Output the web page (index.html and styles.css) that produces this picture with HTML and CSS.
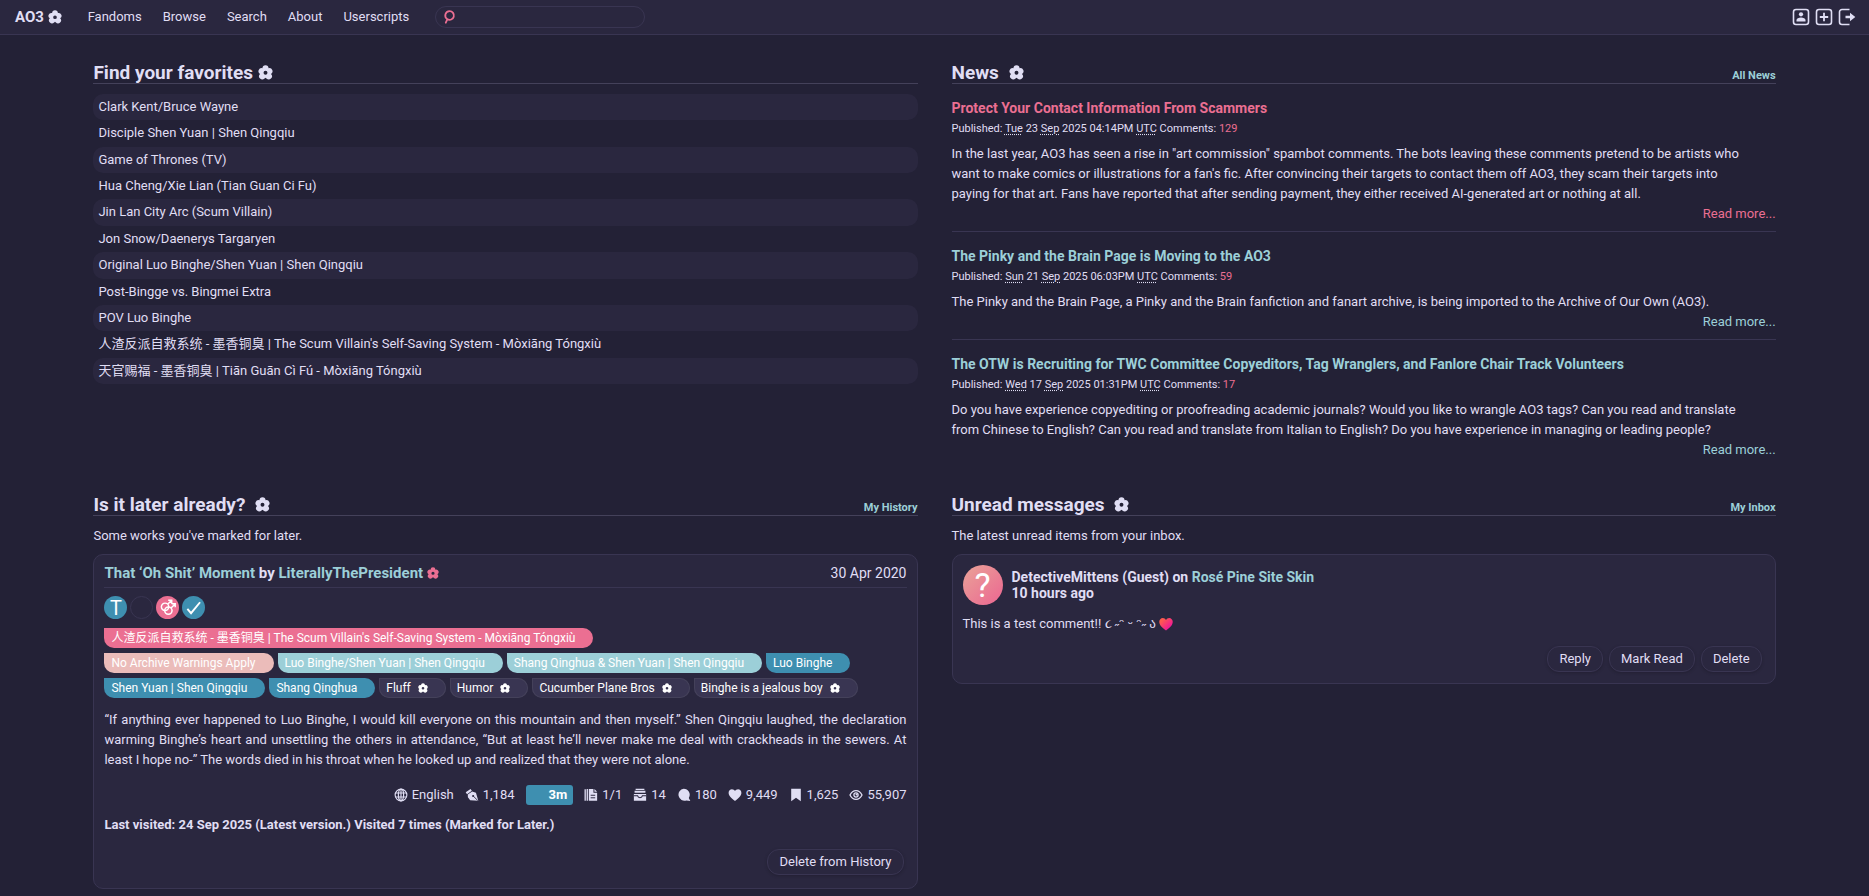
FILE: index.html
```html
<!DOCTYPE html>
<html lang="en">
<head>
<meta charset="utf-8">
<title>AO3</title>
<link rel="stylesheet" href="styles.css">
</head>
<body>
<svg class="sprite" aria-hidden="true">
  <symbol id="flower" viewBox="0 0 16 16"><path fill-rule="evenodd" d="M8 .4a3.3 3.3 0 0 1 3.3 3.1 3.3 3.3 0 0 1 2.6 6 3.3 3.3 0 0 1-4.9 4.8l-1-.8-1 .8a3.3 3.3 0 0 1-4.900-4.800 3.3 3.3 0 0 1 2.600-6A3.300 3.300 0 0 1 8 .4ZM8 6.200a2.100 2.100 0 1 0 0 4.200 2.100 2.100 0 0 0 0-4.200Z"/></symbol>
  <symbol id="lens" viewBox="0 0 14 14"><path d="M7.600 1.200a4.300 4.300 0 1 1-2.200 8l-1.600 3.500M5.400 9.200a4.300 4.300 0 0 1 2.200-8" fill="none" stroke="currentColor" stroke-width="1.800" stroke-linecap="round"/></symbol>
  <symbol id="user" viewBox="0 0 18 18"><rect x="1.500" y="1.500" width="15" height="15" rx="2.500" fill="none" stroke="currentColor" stroke-width="1.600"/><circle cx="9" cy="6.300" r="2.100"/><path d="M4.500 13.500V12c0-1.500 2.200-2.600 4.500-2.600s4.500 1.100 4.500 2.600v1.500Z"/></symbol>
  <symbol id="plus" viewBox="0 0 18 18"><rect x="1.500" y="1.500" width="15" height="15" rx="2.500" fill="none" stroke="currentColor" stroke-width="1.600"/><path d="M8.100 4.800h1.800v3.300h3.300v1.800H9.900v3.300H8.100V9.900H4.800V8.100h3.300Z"/></symbol>
  <symbol id="exit" viewBox="0 0 18 18"><path d="M11.500 1.500H4A2.500 2.500 0 0 0 1.500 4v10A2.500 2.500 0 0 0 4 16.500h7.500" fill="none" stroke="currentColor" stroke-width="1.600"/><path d="M7.500 7.700H12V4.800L17.300 9 12 13.200v-2.900H7.500Z"/></symbol>
  <symbol id="pair" viewBox="0 0 24 24"><g fill="none" stroke="currentColor" stroke-width="1.700"><circle cx="9.200" cy="11.200" r="4.200"/><circle cx="13" cy="15.500" r="4.200"/><path d="M12.200 8.200l4.300-4.300M12.800 3.600h4v4M16 12.500l4.500-4.300M16.800 7.800h4v4"/></g></symbol>
  <symbol id="check" viewBox="0 0 24 24"><path d="M5 13.500l4.200 5L19.500 6" fill="none" stroke="currentColor" stroke-width="2.200"/></symbol>
  <symbol id="globe" viewBox="0 0 16 16"><g fill="none" stroke="currentColor" stroke-width="1.300"><circle cx="8" cy="8" r="6.700"/><ellipse cx="8" cy="8" rx="3" ry="6.700"/><path d="M1.800 5.700h12.400M1.800 10.300h12.400M8 1.300v13.400"/></g></symbol>
  <symbol id="pen" viewBox="0 0 16 16"><path d="M6.300 1L.8 4.900l1.500 2.200L7.800 3.200ZM3.200 7.500l5-3.500 4.300 1.500 2.700 9.200-9.300-.6-2.600-3.600Z"/><path d="M14.600 14.300L9.700 9.500" stroke="#2a273f" stroke-width="1"/><circle cx="9.300" cy="9.200" r="1.200" fill="#2a273f"/></symbol>
  <symbol id="pages" viewBox="0 0 16 16"><path d="M.6 1.500h1.500v13H.6ZM3 1h1.500v13.500H3ZM5.500 1h5.300v4.500H15v9H5.500ZM11.900 1L15 4.400h-3.100Z"/><path d="M7.600 8.300h5.200M7.600 11.200h5.200" stroke="#2a273f" stroke-width="1.100"/></symbol>
  <symbol id="inbox" viewBox="0 0 16 16"><path d="M3 .8h10v1.500H3ZM1.800 3.200h12.400v2.300H1.800ZM1 6.800h14v7.700H1Z"/><path d="M1 8.800h4.200c.3 1.500 1.400 2.300 2.800 2.300s2.500-.8 2.800-2.300H15" fill="none" stroke="#2a273f" stroke-width="1.200"/></symbol>
  <symbol id="bubble" viewBox="0 0 16 16"><path d="M7.600.8a6.900 6.900 0 0 1 5.900 10.500l1.700 3.500-4.500-.6A6.900 6.900 0 1 1 7.600.8Z"/></symbol>
  <symbol id="heart" viewBox="0 0 16 16"><path d="M8 14.800C4 11.800.7 9 .7 5.400.7 3 2.400 1.400 4.500 1.400c1.500 0 2.800.8 3.500 2.100.7-1.300 2-2.100 3.500-2.100 2.100 0 3.800 1.600 3.800 4 0 3.600-3.300 6.400-7.300 9.400Z"/></symbol>
  <symbol id="mark" viewBox="0 0 14 16"><path d="M1.500.8h11v14.400L7 11.200l-5.500 4Z"/></symbol>
  <symbol id="eye" viewBox="0 0 18 16"><g fill="none" stroke="currentColor" stroke-width="1.700"><path d="M1.300 8C3 4.400 5.700 2.300 9 2.300S15 4.400 16.700 8C15 11.600 12.300 13.700 9 13.700S3 11.600 1.300 8Z"/><circle cx="9" cy="8" r="2.700"/></g><circle cx="9.700" cy="7.300" r="1.300"/></symbol>
</svg>

<header class="topbar">
  <a class="brand" href="#">AO3 <svg class="icon"><use href="#flower"/></svg></a>
  <nav class="nav">
    <a href="#">Fandoms</a>
    <a href="#">Browse</a>
    <a href="#">Search</a>
    <a href="#">About</a>
    <a href="#">Userscripts</a>
  </nav>
  <form class="search">
    <svg class="icon search-icon"><use href="#lens"/></svg>
    <input type="text" aria-label="Search works">
  </form>
  <div class="account">
    <a href="#" aria-label="My account"><svg><use href="#user"/></svg></a>
    <a href="#" aria-label="Post"><svg><use href="#plus"/></svg></a>
    <a href="#" aria-label="Log out"><svg><use href="#exit"/></svg></a>
  </div>
</header>

<main class="dashboard">
  <section class="module">
    <div class="module-head"><h2>Find your favorites <svg class="icon"><use href="#flower"/></svg></h2></div>
    <ul class="favorites">
      <li><a href="#">Clark Kent/Bruce Wayne</a></li>
      <li><a href="#">Disciple Shen Yuan | Shen Qingqiu</a></li>
      <li><a href="#">Game of Thrones (TV)</a></li>
      <li><a href="#">Hua Cheng/Xie Lian (Tian Guan Ci Fu)</a></li>
      <li><a href="#">Jin Lan City Arc (Scum Villain)</a></li>
      <li><a href="#">Jon Snow/Daenerys Targaryen</a></li>
      <li><a href="#">Original Luo Binghe/Shen Yuan | Shen Qingqiu</a></li>
      <li><a href="#">Post-Bingge vs. Bingmei Extra</a></li>
      <li><a href="#">POV Luo Binghe</a></li>
      <li><a href="#">人渣反派自救系统 - 墨香铜臭 | The Scum Villain's Self-Saving System - Mòxiāng Tóngxiù</a></li>
      <li><a href="#">天官赐福 - 墨香铜臭 | Tiān Guān Cì Fú - Mòxiāng Tóngxiù</a></li>
    </ul>
  </section>

  <section class="module">
    <div class="module-head"><h2 class="wide">News <svg class="icon"><use href="#flower"/></svg></h2><a href="#">All News</a></div>
    <article class="post active">
      <h3><a href="#">Protect Your Contact Information From Scammers</a></h3>
      <p class="meta">Published: <abbr>Tue</abbr> 23 <abbr>Sep</abbr> 2025 04:14PM <abbr>UTC</abbr> Comments: <a href="#">129</a></p>
      <p class="body">In the last year, AO3 has seen a rise in "art commission" spambot comments. The bots leaving these comments pretend to be artists who want to make comics or illustrations for a fan's fic. After convincing their targets to contact them off AO3, they scam their targets into paying for that art. Fans have reported that after sending payment, they either received AI-generated art or nothing at all.</p>
      <p class="more"><a href="#">Read more...</a></p>
    </article>
    <article class="post">
      <h3><a href="#">The Pinky and the Brain Page is Moving to the AO3</a></h3>
      <p class="meta">Published: <abbr>Sun</abbr> 21 <abbr>Sep</abbr> 2025 06:03PM <abbr>UTC</abbr> Comments: <a href="#">59</a></p>
      <p class="body">The Pinky and the Brain Page, a Pinky and the Brain fanfiction and fanart archive, is being imported to the Archive of Our Own (AO3).</p>
      <p class="more"><a href="#">Read more...</a></p>
    </article>
    <article class="post">
      <h3><a href="#">The OTW is Recruiting for TWC Committee Copyeditors, Tag Wranglers, and Fanlore Chair Track Volunteers</a></h3>
      <p class="meta">Published: <abbr>Wed</abbr> 17 <abbr>Sep</abbr> 2025 01:31PM <abbr>UTC</abbr> Comments: <a href="#">17</a></p>
      <p class="body">Do you have experience copyediting or proofreading academic journals? Would you like to wrangle AO3 tags? Can you read and translate from Chinese to English? Can you read and translate from Italian to English? Do you have experience in managing or leading people?</p>
      <p class="more"><a href="#">Read more...</a></p>
    </article>
  </section>

  <section class="module">
    <div class="module-head"><h2 class="wide">Is it later already? <svg class="icon"><use href="#flower"/></svg></h2><a href="#">My History</a></div>
    <p class="intro">Some works you've marked for later.</p>
    <article class="card">
      <div class="work-head">
        <h3><a href="#">That ‘Oh Shit’ Moment</a> by <a href="#">LiterallyThePresident</a> <svg class="icon"><use href="#flower"/></svg></h3>
        <span>30 Apr 2020</span>
      </div>
      <div class="badges">
        <span class="badge pine">T</span>
        <span class="badge"></span>
        <span class="badge love"><svg><use href="#pair"/></svg></span>
        <span class="badge pine"><svg><use href="#check"/></svg></span>
      </div>
      <ul class="tags">
        <li><a class="tag love" href="#">人渣反派自救系统 - 墨香铜臭 | The Scum Villain's Self-Saving System - Mòxiāng Tóngxiù</a></li>
      </ul>
      <ul class="tags">
        <li><a class="tag rose" href="#">No Archive Warnings Apply</a></li>
        <li><a class="tag foam" href="#">Luo Binghe/Shen Yuan | Shen Qingqiu</a></li>
        <li><a class="tag foam" href="#">Shang Qinghua &amp; Shen Yuan | Shen Qingqiu</a></li>
        <li><a class="tag pine" href="#">Luo Binghe</a></li>
        <li><a class="tag pine" href="#">Shen Yuan | Shen Qingqiu</a></li>
        <li><a class="tag pine" href="#">Shang Qinghua</a></li>
        <li><a class="tag freeform" href="#">Fluff <svg class="icon"><use href="#flower"/></svg></a></li>
        <li><a class="tag freeform" href="#">Humor <svg class="icon"><use href="#flower"/></svg></a></li>
        <li><a class="tag freeform" href="#">Cucumber Plane Bros <svg class="icon"><use href="#flower"/></svg></a></li>
        <li><a class="tag freeform" href="#">Binghe is a jealous boy <svg class="icon"><use href="#flower"/></svg></a></li>
      </ul>
      <p class="summary">“If anything ever happened to Luo Binghe, I would kill everyone on this mountain and then myself.” Shen Qingqiu laughed, the declaration warming Binghe’s heart and unsettling the others in attendance, “But at least he’ll never make me deal with crackheads in the sewers. At least I hope no-” The words died in his throat when he looked up and realized that they were not alone.</p>
      <ul class="stats">
        <li><svg><use href="#globe"/></svg>English</li>
        <li><svg><use href="#pen"/></svg>1,184</li>
        <li class="time">3m</li>
        <li><svg><use href="#pages"/></svg>1/1</li>
        <li><svg><use href="#inbox"/></svg>14</li>
        <li><svg><use href="#bubble"/></svg>180</li>
        <li><svg><use href="#heart"/></svg>9,449</li>
        <li><svg><use href="#mark"/></svg>1,625</li>
        <li><svg><use href="#eye"/></svg>55,907</li>
      </ul>
      <p class="visited">Last visited: 24 Sep 2025 (Latest version.) Visited 7 times (Marked for Later.)</p>
      <div class="actions"><button type="button">Delete from History</button></div>
    </article>
  </section>

  <section class="module">
    <div class="module-head"><h2 class="wide">Unread messages <svg class="icon"><use href="#flower"/></svg></h2><a href="#">My Inbox</a></div>
    <p class="intro">The latest unread items from your inbox.</p>
    <article class="card message">
      <div class="sender">
        <span class="avatar">?</span>
        <h3>DetectiveMittens (Guest) on <a href="#">Rosé Pine Site Skin</a><br>10 hours ago</h3>
      </div>
      <p class="comment">This is a test comment!! ૮ ˶ᵔ ᵕ ᵔ˶ ა
        <svg class="emoji" viewBox="0 0 16 16" role="img" aria-label="heart"><defs><linearGradient id="hot" x1="0" y1="0" x2="1" y2="1"><stop offset="0.200" stop-color="#ff5a4f"/><stop offset="0.800" stop-color="#f0159a"/></linearGradient></defs><path fill="url(#hot)" d="M8 15.500C4 12.500.300 9.500.300 5.400.300 3 2.200 1 4.300 1 5.900 1 7.300 1.900 8 3.300 8.700 1.900 10.100 1 11.700 1c2.100 0 4 2 4 4.400 0 4.100-3.700 7.100-7.700 10.100Z"/></svg>
      </p>
      <div class="actions"><button type="button">Reply</button><button type="button">Mark Read</button><button type="button">Delete</button></div>
    </article>
  </section>
</main>
</body>
</html>
```

FILE: styles.css
```css
:root {
  --base: #232136;
  --surface: #2a273f;
  --overlay: #393552;
  --line: #44415a;
  --text: #e0def4;
  --love: #eb6f92;
  --rose: #ebbcba;
  --pine: #3e8fb0;
  --foam: #9ccfd8;
}

* { box-sizing: border-box; }

body {
  margin: 0;
  background: var(--base);
  color: var(--text);
  font: 13px/20px Roboto, "Noto Sans CJK SC", "DejaVu Sans", sans-serif;
}

h2, h3, p, ul { margin: 0; padding: 0; }
ul { list-style: none; }
a { color: inherit; text-decoration: none; }
svg { fill: currentColor; }
.sprite { display: none; }
.icon { width: 14px; height: 14px; vertical-align: -2px; }

.topbar {
  display: flex;
  align-items: center;
  padding: 6px 13px 6px 15px;
  background: var(--surface);
  border-bottom: 1px solid var(--overlay);
}
.brand { margin-right: 26px; font-size: 15px; font-weight: 700; }
.nav { display: flex; gap: 21px; margin-right: 26px; }
.search {
  display: flex;
  align-items: center;
  width: 210px;
  height: 22px;
  padding: 0 6px;
  border: 1px solid var(--overlay);
  border-radius: 11px;
}
.search-icon { color: var(--love); flex: none; }
.search input {
  flex: 1;
  min-width: 0;
  padding: 0 4px;
  border: 0;
  outline: 0;
  background: none;
  color: inherit;
  font: inherit;
}
.account { display: flex; gap: 5px; margin-left: auto; }
.account a { display: flex; }
.account svg { width: 18px; height: 18px; }

.dashboard {
  display: grid;
  grid-template-columns: repeat(2, minmax(0, 1fr));
  gap: 28px 34px;
  padding: 28px 5% 8px;
}

.module-head {
  display: flex;
  align-items: flex-end;
  justify-content: space-between;
  border-bottom: 1px solid var(--line);
}
.module-head h2 { font-size: 19px; line-height: 20px; font-weight: 700; }
.module-head h2.wide .icon { margin-left: 5px; }
.module-head h2 .icon { width: 15px; height: 15px; vertical-align: -1px; }
.module-head a { color: var(--foam); font-size: 11px; line-height: 14px; font-weight: 700; }

.favorites {
  display: grid;
  grid-auto-rows: 1fr;
  min-height: 290px;
  margin-top: 10px;
}
.favorites li { padding: 3px 5px; border-radius: 10px; }
.favorites li:nth-child(odd) { background: var(--surface); }

.post { padding: 14px 0 8px; border-bottom: 1px solid var(--overlay); }
.post:last-child { border-bottom: 0; }
.post h3 { font-size: 14px; line-height: 20px; color: var(--foam); }
.post.active h3, .post.active .more { color: var(--love); }
.meta { margin-top: 2px; font-size: 11px; line-height: 18px; }
.meta a { color: var(--love); }
.meta abbr { text-decoration: underline dotted; text-underline-offset: 2px; }
.body { margin-top: 6px; padding-right: 20px; }
.more { line-height: 19px; text-align: right; color: var(--foam); }

.intro { margin: 10px 0 8px; }
.card {
  padding: 8px 10px 13px;
  background: var(--surface);
  border: 1px solid var(--overlay);
  border-radius: 10px;
}
.work-head {
  display: flex;
  justify-content: space-between;
  padding-bottom: 4px;
  border-bottom: 1px solid var(--overlay);
  font-size: 14px;
}
.card h3 { font-size: 14px; }
.card h3 a { color: var(--foam); }
.work-head h3 { font-size: 15px; }
.work-head .icon { width: 12px; height: 12px; vertical-align: -1px; color: var(--love); }

.badges { display: flex; gap: 3px; margin: 8px 0 9px; }
.badge {
  display: flex;
  align-items: center;
  justify-content: center;
  width: 23px;
  height: 23px;
  border: 1px solid var(--overlay);
  border-radius: 50%;
  color: #fff;
  font-size: 20px;
}
.badge svg { width: 21px; height: 21px; }
.badge.pine, .badge.love { border: 0; }
.pine { background: var(--pine); }
.love { background: var(--love); }

.tags { display: flex; flex-wrap: wrap; gap: 5px 4px; margin-bottom: 5px; }
.tag {
  display: block;
  height: 20px;
  padding: 0 18px 0 7px;
  border-radius: 0 10px 10px 10px;
  color: #fff;
  font-size: 12px;
}
.tag.rose { background: var(--rose); }
.tag.foam { background: var(--foam); }
.tag.freeform { background: var(--overlay); box-shadow: inset 0 0 0 1px var(--line); }
.tag .icon { width: 10px; height: 10px; margin-left: 4px; vertical-align: -1px; }

.summary { margin-top: 12px; text-align: justify; }

.stats {
  display: flex;
  flex-wrap: wrap;
  justify-content: flex-end;
  gap: 11px;
  margin: 15px 0 10px;
}
.stats li { display: flex; align-items: center; gap: 4px; }
.stats svg { width: 14px; height: 14px; }
.stats .time {
  padding: 0 6px 0 23px;
  border-radius: 3px;
  background: var(--pine);
  color: #fff;
  font-weight: 700;
}
.visited { font-weight: 700; }

.actions { display: flex; justify-content: flex-end; gap: 6px; margin-top: 14px; padding-right: 3px; }
.actions button {
  height: 26px;
  padding: 0 11px;
  border: 1px solid var(--overlay);
  border-radius: 12px;
  background: var(--surface);
  box-shadow: 0 1px 3px rgba(25, 23, 36, 0.4);
  color: inherit;
  font: inherit;
}

.message { padding: 10px 10px 11px; }
.message .actions { margin-top: 12px; }
.sender { display: flex; align-items: center; gap: 9px; }
.sender h3 { line-height: 16px; }
.avatar {
  display: flex;
  align-items: center;
  justify-content: center;
  width: 40px;
  height: 40px;
  border-radius: 50%;
  background: linear-gradient(135deg, #ea9a97 15%, var(--love) 85%);
  color: #fff;
  font-size: 34px;
}
.comment { margin-top: 9px; }
.emoji { width: 14px; height: 14px; vertical-align: -3px; }
```
